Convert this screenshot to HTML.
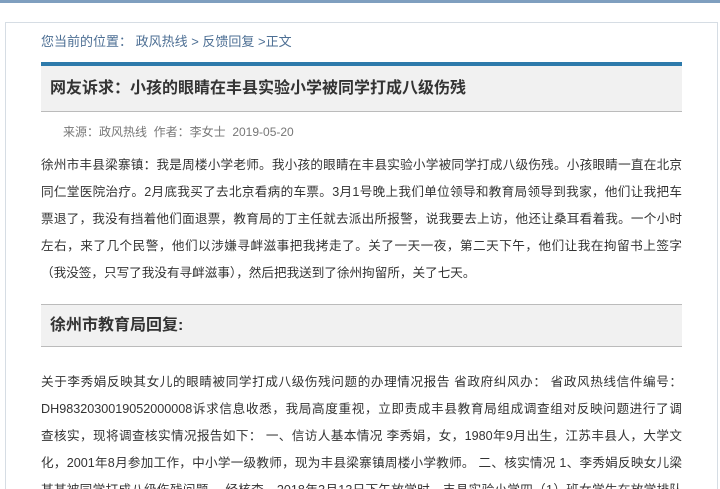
<!DOCTYPE html>
<html><head><meta charset="utf-8"><style>
html,body{margin:0;width:720px;height:489px;overflow:hidden;background:#fff;font-family:"Liberation Sans","Noto Sans CJK SC",sans-serif;position:relative;}
.top{position:absolute;left:0;top:0;width:720px;height:3px;background:#7f9fbf;}
.panel{position:absolute;left:5px;top:22px;width:711px;height:470px;border:1px solid #d6dde4;border-bottom:none;background:#fff;}
.crumb{position:absolute;left:41px;top:31px;font-size:13px;color:#4d6f94;}
.tbox{position:absolute;left:41px;top:62px;width:641px;height:45px;border-top:4px solid #2d7aab;border-bottom:1px solid #bbb;background:#f1f1f1;}
.tbox h1{margin:0;padding-left:9px;font-size:16px;line-height:45px;color:#333;font-weight:bold;}
.meta{position:absolute;left:63px;top:123px;font-size:12px;color:#777;}
.p{position:absolute;left:41px;width:641px;font-size:12.6px;line-height:27px;color:#333;}
.p div{white-space:nowrap;overflow:hidden;height:27px;text-align:justify;text-align-last:justify;}
.p div.l{text-align-last:left;}
.sbox{position:absolute;left:41px;top:304px;width:641px;height:41px;border-top:1px solid #bbb;border-bottom:1px solid #bbb;background:#f1f1f1;}
.sbox h2{margin:0;padding-left:9px;font-size:16px;line-height:41px;color:#333;font-weight:bold;}
</style></head><body>
<div class="top"></div>
<div class="panel"></div>
<div class="crumb">您当前的位置： 政风热线 &gt; 反馈回复 &gt;正文</div>
<div class="tbox"><h1>网友诉求：小孩的眼睛在丰县实验小学被同学打成八级伤残</h1></div>
<div class="meta">来源：政风热线&nbsp; 作者：李女士&nbsp; 2019-05-20</div>
<div class="p" style="top:152px">
<div>徐州市丰县梁寨镇：我是周楼小学老师。我小孩的眼睛在丰县实验小学被同学打成八级伤残。小孩眼睛一直在北京</div>
<div>同仁堂医院治疗。2月底我买了去北京看病的车票。3月1号晚上我们单位领导和教育局领导到我家，他们让我把车</div>
<div>票退了，我没有挡着他们面退票，教育局的丁主任就去派出所报警，说我要去上访，他还让桑耳看着我。一个小时</div>
<div>左右，来了几个民警，他们以涉嫌寻衅滋事把我拷走了。关了一天一夜，第二天下午，他们让我在拘留书上签字</div>
<div class="l">（我没签，只写了我没有寻衅滋事），然后把我送到了徐州拘留所，关了七天。</div>
</div>
<div class="sbox"><h2>徐州市教育局回复:</h2></div>
<div class="p" style="top:369px">
<div>关于李秀娟反映其女儿的眼睛被同学打成八级伤残问题的办理情况报告 省政府纠风办： 省政风热线信件编号：</div>
<div>DH9832030019052000008诉求信息收悉，我局高度重视，立即责成丰县教育局组成调查组对反映问题进行了调</div>
<div>查核实，现将调查核实情况报告如下： 一、信访人基本情况 李秀娟，女，1980年9月出生，江苏丰县人，大学文</div>
<div>化，2001年8月参加工作，中小学一级教师，现为丰县梁寨镇周楼小学教师。 二、核实情况 1、李秀娟反映女儿梁</div>
<div>某某被同学打成八级伤残问题。 经核查，2018年3月13日下午放学时，丰县实验小学四（1）班女学生在放学排队</div>
</div>
</body></html>
